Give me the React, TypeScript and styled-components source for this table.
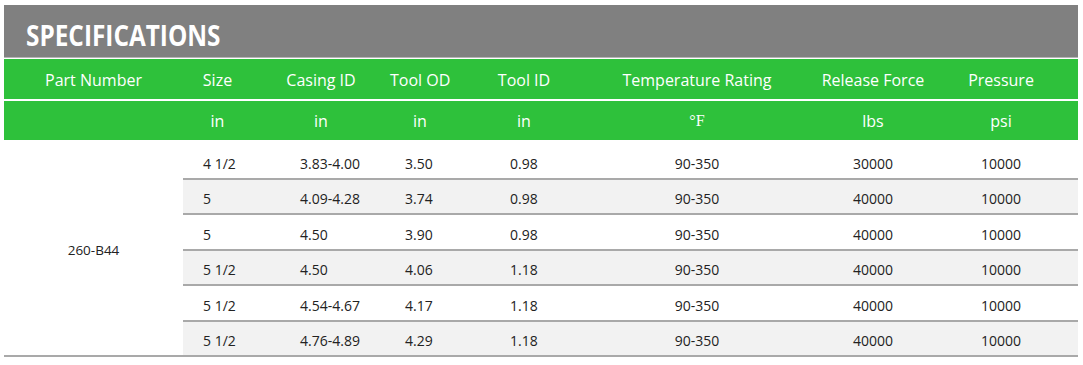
import React from 'react'
import styled, { createGlobalStyle } from 'styled-components';

const GlobalStyle = createGlobalStyle`
  body {
    margin: 0;
    background: #ffffff;
    font-family: "Open Sans", "Liberation Sans", sans-serif;
  }
`;

const HEAD_COLUMNS = '179px 69px 138px 60px 148px 198px 154px 1fr';
const ROW_COLUMNS = '69px 138px 60px 148px 198px 154px 1fr';

type Align = { align: 'left' | 'center'; pad?: number };

const columns: (Align & { title: string; unit: string; serifUnit?: boolean })[] = [
  { title: 'Size', unit: 'in', align: 'left', pad: 20 },
  { title: 'Casing ID', unit: 'in', align: 'left', pad: 48 },
  { title: 'Tool OD', unit: 'in', align: 'left', pad: 15 },
  { title: 'Tool ID', unit: 'in', align: 'left', pad: 60 },
  { title: 'Temperature Rating', unit: '°F', align: 'center', serifUnit: true },
  { title: 'Release Force', unit: 'lbs', align: 'center' },
  { title: 'Pressure', unit: 'psi', align: 'center' },
];

const rows = [
  ['4 1/2', '3.83-4.00', '3.50', '0.98', '90-350', '30000', '10000'],
  ['5', '4.09-4.28', '3.74', '0.98', '90-350', '40000', '10000'],
  ['5', '4.50', '3.90', '0.98', '90-350', '40000', '10000'],
  ['5 1/2', '4.50', '4.06', '1.18', '90-350', '40000', '10000'],
  ['5 1/2', '4.54-4.67', '4.17', '1.18', '90-350', '40000', '10000'],
  ['5 1/2', '4.76-4.89', '4.29', '1.18', '90-350', '40000', '10000'],
];

function App() {
  return (
    <Page>
      <GlobalStyle />
      <TitleBar>
        <Title>SPECIFICATIONS</Title>
      </TitleBar>
      <HeadRow>
        <HeadCell>Part Number</HeadCell>
        {columns.map((c, i) => (
          <HeadCell key={c.title} $last={i === columns.length - 1}>{c.title}</HeadCell>
        ))}
      </HeadRow>
      <UnitRow>
        <HeadCell />
        {columns.map((c, i) => (
          <HeadCell key={c.title} $last={i === columns.length - 1} $serif={c.serifUnit}>{c.unit}</HeadCell>
        ))}
      </UnitRow>
      <Body>
        <PartCell>260-B44</PartCell>
        <Rows>
          {rows.map((r, i) => (
            <Row key={i} $striped={i % 2 === 1} $last={i === rows.length - 1}>
              {r.map((v, j) => (
                <Cell key={j} $align={columns[j].align} $pad={columns[j].pad ?? 0} $last={j === r.length - 1}>
                  {v}
                </Cell>
              ))}
            </Row>
          ))}
        </Rows>
      </Body>
    </Page>
  )
}

const Page = styled.div`
  padding: 5px 5px 0 4px;
  width: 1074px;
`;

const TitleBar = styled.div`
  height: 53px;
  box-sizing: border-box;
  background: #808080;
  border-bottom: 1px solid #b5b5b5;
  padding: 15px 0 0 22px;
`;

const Title = styled.span`
  display: inline-block;
  font-family: "Open Sans", sans-serif;
  font-weight: 700;
  font-size: 29px;
  line-height: 29px;
  color: #ffffff;
  transform: scaleX(0.84);
  transform-origin: left center;
`;

const HeadRow = styled.div`
  display: grid;
  grid-template-columns: ${HEAD_COLUMNS};
  align-items: center;
  height: 40px;
  margin-top: 1px;
  padding-top: 1px;
  box-sizing: border-box;
  background: #2ec13b;
`;

const UnitRow = styled(HeadRow)`
  height: 39px;
  margin-top: 2px;
`;

const HeadCell = styled.div<{ $last?: boolean; $serif?: boolean }>`
  text-align: center;
  white-space: nowrap;
  color: #ffffff;
  font-size: 16px;
  font-family: ${p => (p.$serif ? '"Liberation Serif", serif' : '"Open Sans", sans-serif')};
  padding-right: ${p => (p.$last ? '26px' : '0')};
`;

const Body = styled.div`
  display: flex;
  padding-top: 4px;
  border-bottom: 2px solid #a9a9a9;
`;

const PartCell = styled.div`
  width: 179px;
  display: flex;
  align-items: center;
  justify-content: center;
  font-size: 13.5px;
  color: #222222;
`;

const Rows = styled.div`
  flex: 1;
  display: flex;
  flex-direction: column;
`;

const Row = styled.div<{ $striped: boolean; $last: boolean }>`
  display: grid;
  grid-template-columns: ${ROW_COLUMNS};
  align-items: center;
  height: ${p => (p.$last ? '33.5px' : '35.5px')};
  box-sizing: border-box;
  padding-top: 5px;
  background: ${p => (p.$striped ? '#f2f2f2' : '#ffffff')};
  border-bottom: ${p => (p.$last ? 'none' : '2px solid #a9a9a9')};
`;

const Cell = styled.div<{ $align: 'left' | 'center'; $pad: number; $last: boolean }>`
  font-size: 14px;
  color: #222222;
  white-space: nowrap;
  text-align: ${p => p.$align};
  padding-left: ${p => p.$pad}px;
  padding-right: ${p => (p.$last ? '26px' : '0')};
`;

export default App
